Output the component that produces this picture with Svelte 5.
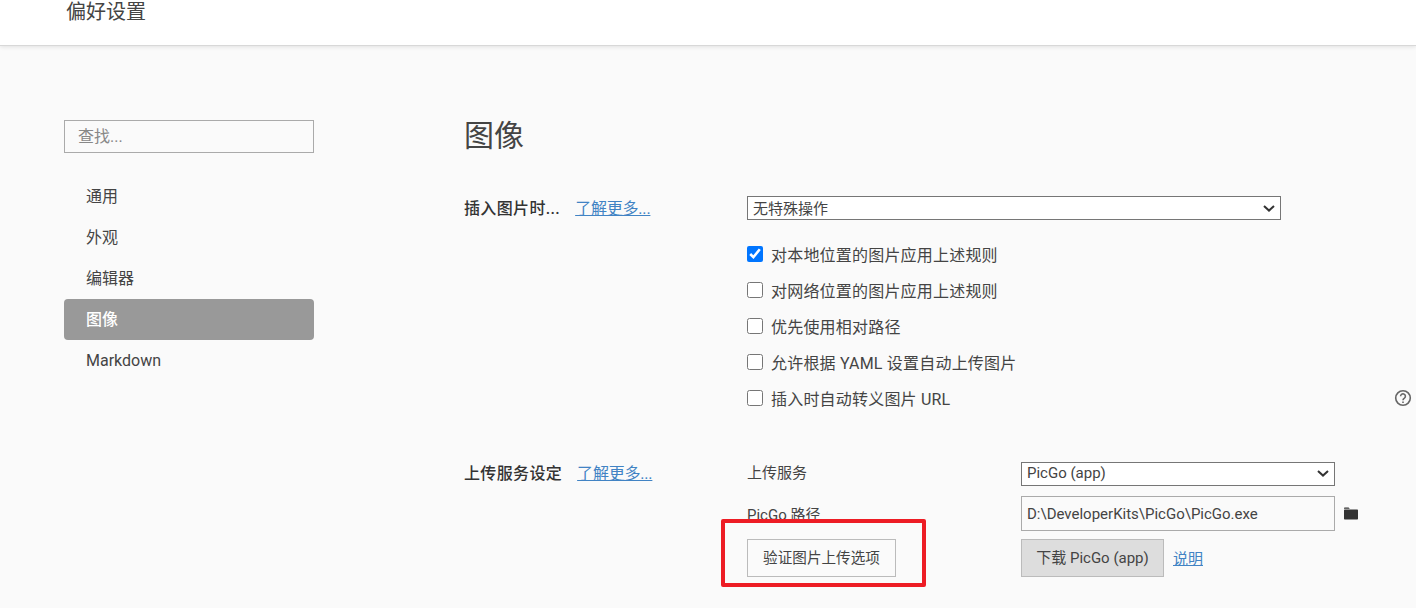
<script lang="ts">
  const navItems = ['通用', '外观', '编辑器', '图像', 'Markdown'];
  const active = '图像';
  const imageRules = [
    { label: '对本地位置的图片应用上述规则', checked: true },
    { label: '对网络位置的图片应用上述规则', checked: false },
    { label: '优先使用相对路径', checked: false },
    { label: '允许根据 YAML 设置自动上传图片', checked: false },
    { label: '插入时自动转义图片 URL', checked: false },
  ];
</script>

<div class="page">
  <header><span>偏好设置</span></header>
  <div class="layout">
    <aside>
      <input class="search" type="text" placeholder="查找..." />
      <nav>
        {#each navItems as item}
          <div class="nav-item" class:active={item === active}>{item}</div>
        {/each}
      </nav>
    </aside>
    <main>
      <h1>图像</h1>
      <section class="insert">
        <div class="heading"><b>插入图片时...</b><a href="#more">了解更多...</a></div>
        <div class="options">
          <select class="wide"><option>无特殊操作</option></select>
          <div class="checks">
            {#each imageRules as rule, i}
              <div class="check-row">
                <label><input type="checkbox" checked={rule.checked} />{rule.label}</label>
                {#if i === imageRules.length - 1}
                  <svg class="help" width="18" height="18" viewBox="0 0 18 18" fill="none" stroke="#666" stroke-width="1.6">
                    <circle cx="9" cy="9" r="7.3" />
                    <path d="M6.6 7.2a2.4 2.4 0 1 1 3.8 2c-.9.6-1.4 1-1.4 2" />
                    <path d="M9 12.4v1.5" />
                  </svg>
                {/if}
              </div>
            {/each}
          </div>
        </div>
      </section>
      <section class="upload">
        <div class="heading"><b>上传服务设定</b><a href="#more">了解更多...</a></div>
        <div class="upload-grid">
          <span class="service-label">上传服务</span>
          <select class="service"><option>PicGo (app)</option></select>
          <span></span>
          <span>PicGo 路径</span>
          <input class="path" type="text" value="D:\DeveloperKits\PicGo\PicGo.exe" />
          <svg class="folder" width="16" height="13" viewBox="0 0 16 13">
            <path fill="#333" d="M1 1.6C1 1 1.4.6 2 .6h3.6l1.2 1.2H1z" />
            <path fill="#333" d="M1 3.6c0-.6.4-1 1-1h12c.6 0 1 .4 1 1v7.8c0 .6-.4 1-1 1H2c-.6 0-1-.4-1-1z" />
          </svg>
          <div class="verify-cell">
            <button class="verify">验证图片上传选项</button>
            <div class="annotation"></div>
          </div>
          <div class="download-cell">
            <button class="download">下载 PicGo (app)</button>
            <a href="#help">说明</a>
          </div>
        </div>
      </section>
    </main>
  </div>
</div>

<style>
  :global(body) {
    margin: 0;
    background: #fafafa;
  }
  .page {
    height: 608px;
    overflow: hidden;
    background: #fafafa;
    color: #444;
    font-family: Roboto, 'Noto Sans CJK SC', sans-serif;
    font-size: 16px;
  }
  header {
    height: 46px;
    box-sizing: border-box;
    padding-left: 66px;
    background: #fff;
    border-bottom: 1px solid #d8d8d8;
    box-shadow: 0 1px 4px rgba(0, 0, 0, 0.1);
    font-size: 20px;
    line-height: 24px;
  }
  .layout {
    display: flex;
  }
  aside {
    width: 250px;
    margin-left: 64px;
    padding-top: 74px;
    flex: none;
  }
  .search {
    display: block;
    width: 100%;
    height: 33px;
    box-sizing: border-box;
    padding: 0 13px;
    border: 1px solid #aaa;
    background: transparent;
    font: inherit;
    outline: none;
  }
  .search::placeholder {
    color: #888;
  }
  nav {
    margin-top: 23px;
  }
  .nav-item {
    height: 41px;
    line-height: 41px;
    padding-left: 22px;
    border-radius: 4px;
  }
  .nav-item.active {
    background: #999;
    color: #fff;
    font-weight: 500;
  }
  main {
    flex: 1;
    margin-left: 150px;
    margin-right: 4px;
    min-width: 0;
  }
  h1 {
    margin: 0;
    padding-top: 70px;
    height: 80px;
    font-size: 30px;
    line-height: 40px;
    font-weight: 400;
  }
  section {
    display: grid;
    grid-template-columns: 283px 1fr;
  }
  .heading {
    display: flex;
    gap: 15px;
    align-items: center;
    height: 22px;
  }
  .upload .heading {
    height: 20px;
  }
  .heading b {
    font-weight: 500;
    letter-spacing: 0.35px;
    color: #333;
  }
  .heading a {
    letter-spacing: -0.2px;
  }
  a {
    color: #4183c4;
    text-decoration: underline;
  }
  .upload-grid a {
    font-size: 15px;
    margin-bottom: 2px;
  }
  select {
    appearance: none;
    height: 24px;
    box-sizing: border-box;
    padding: 0 20px 0 5px;
    border: 1px solid #767676;
    border-radius: 0;
    background: #fff url("data:image/svg+xml,%3Csvg xmlns='http://www.w3.org/2000/svg' width='12' height='7'%3E%3Cpath d='M1 1l5 4.6L11 1' fill='none' stroke='%23333' stroke-width='2'/%3E%3C/svg%3E") no-repeat right 5px center;
    color: #444;
    font: inherit;
    font-size: 15px;
  }
  .wide {
    display: block;
    width: 534px;
    padding-top: 1px;
  }
  .checks {
    margin-top: 16px;
  }
  .check-row {
    display: flex;
    align-items: center;
    height: 36px;
  }
  label {
    display: flex;
    align-items: center;
    gap: 8px;
    letter-spacing: 0.2px;
  }
  input[type='checkbox'] {
    width: 16px;
    height: 16px;
    margin: 0;
  }
  .help {
    margin-left: auto;
  }
  .upload {
    margin-top: 46px;
  }
  .upload-grid {
    display: grid;
    grid-template-columns: 274px 314px auto;
    grid-template-rows: 26px 35px 38px;
    row-gap: 8px;
    align-items: center;
    font-size: 15px;
  }
  .service {
    width: 100%;
    align-self: start;
    padding-bottom: 2px;
    background-position: right 5px top 7px;
  }
  .service-label {
    align-self: start;
    line-height: 22px;
  }
  .path {
    width: 100%;
    height: 35px;
    box-sizing: border-box;
    padding: 0 5px;
    border: 1px solid #aaa;
    background: transparent;
    color: #444;
    font: inherit;
    outline: none;
  }
  .folder {
    margin-left: 8px;
  }
  .verify-cell {
    position: relative;
  }
  button {
    height: 38px;
    box-sizing: border-box;
    border: 1px solid #bbb;
    color: #444;
    font: inherit;
    padding: 0 0 4px;
  }
  .verify {
    display: block;
    width: 149px;
    background: transparent;
    font-size: 14.6px;
  }
  .annotation {
    position: absolute;
    left: -26px;
    top: -20px;
    width: 205px;
    height: 68px;
    box-sizing: border-box;
    border: 4px solid #ed1c24;
    border-radius: 2px;
  }
  .download-cell {
    display: flex;
    align-items: center;
    gap: 9px;
    grid-column: span 2;
  }
  .download {
    width: 143px;
    background: #ddd;
  }
</style>
